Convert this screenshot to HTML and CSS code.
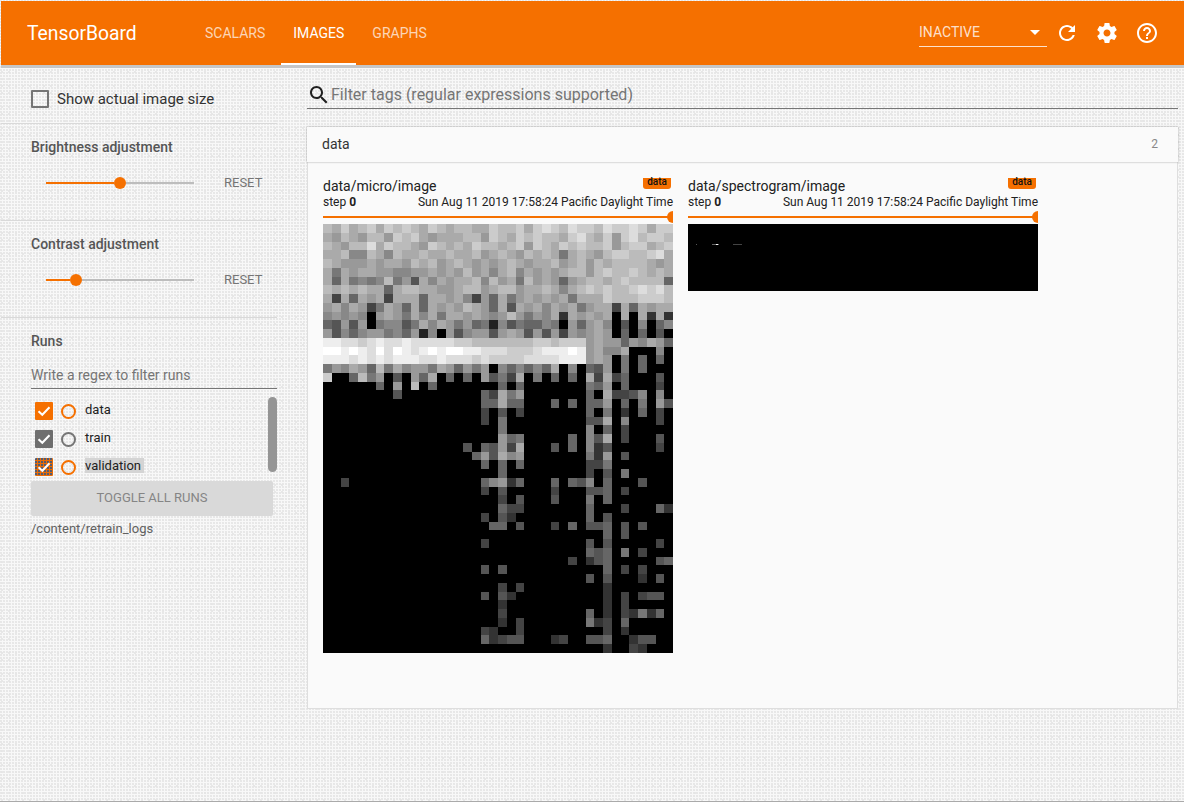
FILE: index.html
```html
<!DOCTYPE html>
<html>
<head>
  <meta charset="UTF-8">
  <title>TensorBoard</title>
  <link rel="stylesheet" href="styles.css">
</head>
<body>

<div class="app">

  <header class="toolbar">
    <div class="brand">TensorBoard</div>
    <nav class="tabs">
      <a class="tab">SCALARS</a>
      <a class="tab active">IMAGES</a>
      <a class="tab">GRAPHS</a>
    </nav>
    <div class="run-select">
      <span>INACTIVE</span>
      <i class="caret"></i>
    </div>
    <button class="icon-btn">
      <svg viewBox="0 0 24 24" width="24" height="24"><path d="M17.65 6.35C16.2 4.9 14.21 4 12 4c-4.42 0-7.99 3.58-7.99 8s3.57 8 7.99 8c3.73 0 6.84-2.55 7.73-6h-2.08c-.82 2.33-3.04 4-5.65 4-3.31 0-6-2.69-6-6s2.69-6 6-6c1.66 0 3.14.69 4.22 1.78L13 11h7V4l-2.35 2.35z"/></svg>
    </button>
    <button class="icon-btn">
      <svg viewBox="0 0 24 24" width="24" height="24"><path d="M19.43 12.98c.04-.32.07-.64.07-.98s-.03-.66-.07-.98l2.11-1.65c.19-.15.24-.42.12-.64l-2-3.46c-.12-.22-.39-.3-.61-.22l-2.49 1c-.52-.4-1.08-.73-1.69-.98l-.38-2.65C14.46 2.18 14.25 2 14 2h-4c-.25 0-.46.18-.49.42l-.38 2.65c-.61.25-1.17.59-1.69.98l-2.49-1c-.23-.09-.49 0-.61.22l-2 3.46c-.13.22-.07.49.12.64l2.11 1.65c-.04.32-.07.65-.07.98s.03.66.07.98l-2.11 1.65c-.19.15-.24.42-.12.64l2 3.46c.12.22.39.3.61.22l2.49-1c.52.4 1.08.73 1.69.98l.38 2.65c.03.24.24.42.49.42h4c.25 0 .46-.18.49-.42l.38-2.65c.61-.25 1.17-.59 1.69-.98l2.49 1c.23.09.49 0 .61-.22l2-3.46c.12-.22.07-.49-.12-.64l-2.11-1.65zM12 15.5c-1.93 0-3.5-1.57-3.5-3.5s1.57-3.5 3.5-3.5 3.5 1.57 3.5 3.5-1.57 3.5-3.5 3.5z"/></svg>
    </button>
    <button class="icon-btn">
      <svg viewBox="0 0 24 24" width="24" height="24"><path d="M11 18h2v-2h-2v2zm1-16C6.48 2 2 6.48 2 12s4.48 10 10 10 10-4.48 10-10S17.52 2 12 2zm0 18c-4.41 0-8-3.59-8-8s3.59-8 8-8 8 3.59 8 8-3.59 8-8 8zm0-14c-2.21 0-4 1.79-4 4h2c0-1.1.9-2 2-2s2 .9 2 2c0 2-3 1.75-3 5h2c0-2.25 3-2.5 3-5 0-2.21-1.79-4-4-4z"/></svg>
    </button>
  </header>

  <div class="main">

    <aside class="sidebar">
      <section class="side-section first">
        <label class="actual-size">
          <i class="box-empty"></i>
          <span>Show actual image size</span>
        </label>
      </section>

      <section class="side-section">
        <h3>Brightness adjustment</h3>
        <div class="slider-row">
          <div class="slider">
            <i class="fill" style="width: 68px"></i><i class="thumb"></i><i class="rest"></i>
          </div>
          <span class="reset">RESET</span>
        </div>
      </section>

      <section class="side-section">
        <h3>Contrast adjustment</h3>
        <div class="slider-row">
          <div class="slider">
            <i class="fill" style="width: 24px"></i><i class="thumb"></i><i class="rest"></i>
          </div>
          <span class="reset">RESET</span>
        </div>
      </section>

      <section class="runs">
        <h3>Runs</h3>
        <div class="regex">Write a regex to filter runs</div>
        <div class="run-list">
          <div class="run">
            <i class="check orange"><svg viewBox="0 0 18 18"><path d="M3.5 9.2l3.8 3.6 7.2-7.6"/></svg></i>
            <i class="radio orange"></i>
            <span>data</span>
          </div>
          <div class="run">
            <i class="check gray"><svg viewBox="0 0 18 18"><path d="M3.5 9.2l3.8 3.6 7.2-7.6"/></svg></i>
            <i class="radio gray"></i>
            <span>train</span>
          </div>
          <div class="run">
            <i class="check orange dim"><svg viewBox="0 0 18 18"><path d="M3.5 9.2l3.8 3.6 7.2-7.6"/></svg></i>
            <i class="radio orange"></i>
            <span class="selected">validation</span>
          </div>
          <i class="scroll-thumb"></i>
        </div>
        <div class="toggle-all">TOGGLE ALL RUNS</div>
        <div class="logdir">/content/retrain_logs</div>
      </section>
    </aside>

    <div class="content">
      <div class="tag-filter">
        <svg viewBox="0 0 24 24" width="24" height="24"><path d="M15.5 14h-.79l-.28-.27C15.41 12.59 16 11.11 16 9.5 16 5.91 13.09 3 9.5 3S3 5.91 3 9.5 5.91 16 9.5 16c1.61 0 3.09-.59 4.23-1.57l.27.28v.79l5 4.99L20.49 19l-4.99-5zm-6 0C7.01 14 5 11.99 5 9.5S7.01 5 9.5 5 14 7.01 14 9.5 11.99 14 9.5 14z"/></svg>
        <span>Filter tags (regular expressions supported)</span>
      </div>

      <div class="pane">
        <div class="pane-head">
          <span>data</span>
          <span class="count">2</span>
        </div>
        <div class="cards">

          <div class="card">
            <div class="card-title">
              <span>data/micro/image</span>
              <span class="badge">data</span>
            </div>
            <div class="card-meta">
              <span>step <b>0</b></span>
              <span>Sun Aug 11 2019 17:58:24 Pacific Daylight Time</span>
            </div>
            <div class="step-slider"><i></i></div>
            <canvas id="micro" class="micro" width="40" height="49"></canvas>
          </div>

          <div class="card">
            <div class="card-title">
              <span>data/spectrogram/image</span>
              <span class="badge">data</span>
            </div>
            <div class="card-meta">
              <span>step <b>0</b></span>
              <span>Sun Aug 11 2019 17:58:24 Pacific Daylight Time</span>
            </div>
            <div class="step-slider"><i></i></div>
            <svg class="spectrogram" viewBox="0 0 350 67" width="350" height="67">
              <rect width="350" height="67" fill="#000"/>
              <rect x="8" y="20" width="1" height="1" fill="#555"/>
              <rect x="24" y="20" width="7" height="1" fill="#666"/>
              <rect x="28" y="20" width="2" height="1" fill="#fff"/>
              <rect x="45" y="20" width="9" height="1" fill="#444"/>
            </svg>
          </div>

        </div>
      </div>
    </div>

  </div>
</div>

<script src="image.js"></script>
</body>
</html>
```

FILE: styles.css
```css
* {
  box-sizing: border-box;
}
body {
  margin: 0;
  font-family: Roboto, sans-serif;
  background-color: #f8f8f8;
  background-image:
    radial-gradient(circle at 1px 1px, #e6e6e6 0.7px, transparent 0.8px),
    radial-gradient(circle at 2px 2px, #e6e6e6 0.7px, transparent 0.8px);
  background-size: 3px 3px, 7px 7px;
  color: #212121;
}
i {
  display: block;
}
h3 {
  margin: 0;
  font-size: 14px;
  font-weight: 500;
  line-height: 18px;
  color: #555;
}
.app {
  height: 802px;
  padding: 1px 0 0 1px;
  border-bottom: 1px solid #aaa;
  overflow: hidden;
}

/* toolbar */
.toolbar {
  display: flex;
  align-items: center;
  height: 64px;
  padding: 0 17px 0 26px;
  background-color: #f57000;
  box-shadow: 0 3px 0 #c6c6c6;
  position: relative;
  color: #fff;
}
.brand {
  width: 166px;
  font-size: 19.3px;
}
.tabs {
  display: flex;
  align-self: stretch;
  gap: 4px;
  flex: 1;
}
.tab {
  display: flex;
  align-items: center;
  padding: 2px 12px 0;
  font-size: 14px;
  color: rgba(255, 255, 255, 0.72);
  border-bottom: 2px solid transparent;
}
.tab.active {
  color: #fff;
  border-bottom-color: #fff;
}
.run-select {
  display: flex;
  align-items: center;
  justify-content: space-between;
  width: 128px;
  height: 28px;
  padding: 0 7px 1px 0;
  font-size: 14px;
  color: rgba(255, 255, 255, 0.8);
  border-bottom: 1px solid rgba(255, 255, 255, 0.8);
}
.caret {
  width: 0;
  height: 0;
  border-left: 5px solid transparent;
  border-right: 5px solid transparent;
  border-top: 5px solid #fff;
}
.icon-btn {
  display: flex;
  align-items: center;
  justify-content: center;
  width: 40px;
  height: 40px;
  padding: 0;
  border: none;
  background: none;
  fill: #fff;
}

/* sidebar */
.main {
  display: flex;
}
.sidebar {
  width: 306px;
  flex: none;
  padding-right: 30px;
}
.side-section {
  height: 97px;
  padding: 14px 0 0 30px;
  border-bottom: 1px solid #d9d9d9;
}
.side-section.first {
  height: 59px;
  padding-top: 25px;
}
.actual-size {
  display: flex;
  align-items: center;
  gap: 8px;
  font-size: 15px;
  color: #333;
}
.box-empty {
  width: 18px;
  height: 18px;
  border: 2px solid #757575;
  border-radius: 1px;
}
.slider-row {
  display: flex;
  align-items: center;
  height: 24px;
  margin-top: 15px;
  padding-left: 15px;
}
.slider {
  display: flex;
  align-items: center;
  width: 148px;
}
.fill {
  height: 2px;
  background-color: #f57000;
}
.thumb {
  flex: none;
  width: 12px;
  height: 12px;
  border-radius: 50%;
  background-color: #f57000;
}
.rest {
  flex: 1;
  height: 2px;
  background-color: #bdbdbd;
}
.reset {
  margin: 0 0 2px 30px;
  font-size: 13px;
  color: #757575;
}
.runs {
  padding: 14px 0 0 30px;
}
.regex {
  height: 28px;
  margin-top: 11px;
  font-size: 14px;
  line-height: 29px;
  color: #757575;
  border-bottom: 1px solid #757575;
}
.run-list {
  position: relative;
  height: 84px;
  margin-top: 8px;
  padding-left: 4px;
}
.run {
  display: flex;
  align-items: center;
  height: 28px;
  font-size: 13px;
  color: #212121;
}
.run span {
  margin-bottom: 3px;
}
.check {
  width: 18px;
  height: 18px;
  border-radius: 1px;
}
.check svg {
  display: block;
  fill: none;
  stroke: #fff;
  stroke-width: 2;
}
.check.orange {
  background-color: #f57000;
}
.check.gray {
  background-color: #6e6e6e;
}
.check.dim {
  background-color: #e96c06;
  background-image: radial-gradient(circle at 1px 1px, #4a5a78 0.7px, transparent 0.8px);
  background-size: 3px 3px;
}
.radio {
  width: 15px;
  height: 15px;
  margin: 0 9px 0 8px;
  border: 2px solid;
  border-radius: 50%;
}
.radio.orange {
  border-color: #f57000;
}
.radio.gray {
  border-color: #757575;
}
.selected {
  background-color: #d4d4d4;
  padding-right: 3px;
}
.scroll-thumb {
  position: absolute;
  top: 0;
  right: 0;
  width: 9px;
  height: 75px;
  border-radius: 5px;
  background-color: #959595;
}
.toggle-all {
  width: 242px;
  height: 35px;
  font-size: 13px;
  line-height: 33px;
  text-align: center;
  color: #858585;
  background-color: #d9d9d9;
  border-radius: 2px;
}
.logdir {
  margin-top: 4px;
  font-size: 13px;
  line-height: 18px;
  color: #616161;
}

/* main content */
.content {
  flex: 1;
  margin-right: 6px;
}
.tag-filter {
  display: flex;
  align-items: flex-end;
  height: 44px;
  padding-bottom: 1px;
  font-size: 16px;
  line-height: 24px;
  color: #757575;
  border-bottom: 1px solid #757575;
}
.tag-filter svg {
  fill: #212121;
}
.pane {
  height: 582px;
  margin-top: 18px;
  background-color: #fafafa;
  border: 1px solid #dedede;
  border-top: none;
}
.pane-head {
  display: flex;
  align-items: center;
  justify-content: space-between;
  height: 35px;
  margin: 0 -1px;
  padding: 0 20px 1px 15px;
  font-size: 14px;
  background-color: #fafafa;
  box-shadow: 0 0 2px rgba(0, 0, 0, 0.35);
  color: #333;
}
.count {
  font-size: 12px;
  color: #888;
}
.cards {
  display: flex;
  gap: 15px;
  padding: 15px 0 0 15px;
}
.card {
  width: 350px;
}
.card-title {
  display: flex;
  justify-content: space-between;
  height: 18px;
  font-size: 14px;
  line-height: 18px;
}
.badge {
  align-self: flex-start;
  height: 11px;
  width: 28px;
  margin: 1px 2px 0 0;
  font-size: 10px;
  font-weight: 500;
  line-height: 7px;
  text-align: center;
  color: #111;
  background-color: #f57000;
  border-radius: 0 0 3px 3px;
}
.card-meta {
  display: flex;
  justify-content: space-between;
  height: 14px;
  font-size: 12px;
  line-height: 14px;
}
.step-slider {
  display: flex;
  align-items: center;
  justify-content: flex-end;
  height: 12px;
  margin-top: 2px;
  background: linear-gradient(#f57000, #f57000) center / 100% 2px no-repeat;
  overflow: hidden;
}
.step-slider i {
  flex: none;
  width: 12px;
  height: 12px;
  margin-right: -6px;
  border-radius: 50%;
  background-color: #f57000;
}
.micro {
  display: block;
  width: 350px;
  height: 429px;
  margin-top: 1px;
  image-rendering: pixelated;
}
.spectrogram {
  display: block;
  margin-top: 1px;
}
```

FILE: image.js
```js
// gray levels of the micro image, one hex digit per cell, 40 x 49
var g0 = "0000000000";
var rows = [
  "bacabcacbc bacbabbaac bbcacdcbdc cbdccdcacc",
  "a9ba9bb9cb ca9aaabb9c bacbcbbacd bac9cdbccb",
  "ba9bbdacbb a9cbabacbb abc9cbacbc bbc9bccabc",
  "aab88ba8ba abaabaab9a ba9baba7ab a9bccbbcda",
  "ba999a9aa9 bab9aba9a9 aba9aab9ab 9babbbba9a",
  "a7a9aa9988 99a9a9b9a8 ab8a9a9abb 9bcbbcbaba",
  "a6a7878b79 4a8a9aab8b 9a7b9a969a bbabcbbbb6",
  "bababaa6ab baa99abb9a bb9aaba8ab cbcbbcdcdb",
  "a3a6a9a3aa a6aa9a8396 a79a9a9a7a aacbbbcccb",
  "9a8a937a96 a6a9a9ba95 a4a9a8a9a7 9aa3a5a9aa",
  "8989809a97 a8a7aa9a98 9b9798a2a9 a9a0a0a2a2",
  "6494907884 7a8a979571 8475587095 9a80408058",
  "9485899786 9180948994 9a94949398 9a90606040",
  "eeddcdedde dddddccbbb bbbbccbccc 9a99698a95",
  "ffefedfdfe defeffeedd dcccdeeefe 9a88a00080",
  "eeedededee eddedddcdc cccddddeee 9a90706050",
  "798a95b7a8 997a969790 858686a080 5490705000",
  "c005b79040 96a0605094 73a0706060 a3a3600040",
  "0000006090 b060000000 5050000000 7690600030",
  "0000000040 0000000063 a790000000 60a3348080",
  "0 0000000066 a560005060 5590607094",
  "0 0000000030 4030000000 5070206030",
  "0 0000000030 7000000000 44a0800030",
  "0 0 7000000000 8050300000",
  "0 0 9570000060 84a0300040",
  "0 0000004064 93a0004060 8240000030",
  "0 0000000694 a890000000 7290400000",
  "0 0000000050 6060000000 3370000000",
  "0 0 6000000000 3040700000",
  "0030000000 0000000058 9250005054 8060004000",
  "0 0000000030 4000003000 4450300000",
  "0 0 3040004000 7050000000",
  "0 0 6330000000 5000300052",
  "0 0000000030 4200000000 6040000000",
  "0 0000000005 6040003050 4450404000",
  "0 0 0 0050400000",
  "0 0000000030 0 4040000030",
  "0 0 0 5460703000",
  "0 0 0000000030 2450000045",
  "0 0000000040 4000000000 0050303000",
  "0 0 0 4040002040",
  "0 0 3030000000 0020000000",
  "0 0000000040 4200000000 0020303440",
  "0 0 2000000000 0020300000",
  "0 0 3000000000 6020327260",
  "0 0 2030000000 7230600000",
  "0 0000000032 0030000000 0030200000",
  "0 0000000062 3440002300 4460024400",
  "0 0 0 0020032000"
];

var ctx = document.getElementById("micro").getContext("2d");

rows.forEach(function (row, y) {
  var cells = row.split(" ").map(function (part) {
    return part === "0" ? g0 : part;
  }).join("");
  for (var x = 0; x < 40; x++) {
    var level = parseInt(cells[x] || "0", 16);
    // the dark cells read a bit lighter in the source image
    if (level > 0 && level < 6) level += 1;
    var v = level * 17;
    ctx.fillStyle = "rgb(" + v + "," + v + "," + v + ")";
    ctx.fillRect(x, y, 1, 1);
  }
});
```
